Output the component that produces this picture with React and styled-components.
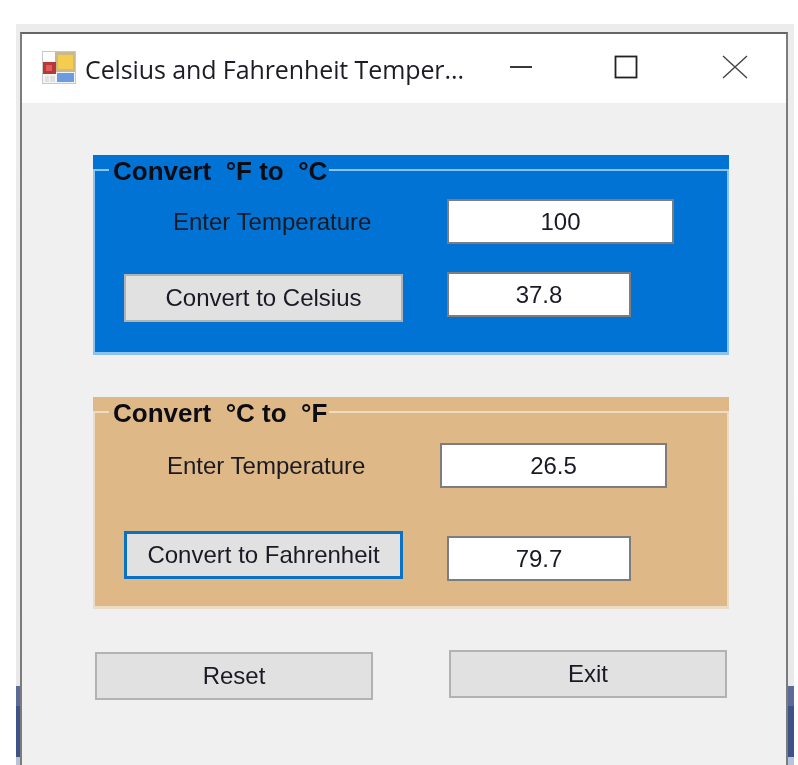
import styled, { createGlobalStyle } from 'styled-components';

const GlobalStyle = createGlobalStyle`
  html, body {
    margin: 0;
    padding: 0;
    background: #fff;
  }
`;

const Desktop = styled.div`
  box-sizing: border-box;
  width: 778px;
  height: 741px;
  margin: 24px 0 0 16px;
  padding: 8px 6px 0 4px;
  overflow: hidden;
  background: linear-gradient(
    to bottom,
    #ececec 0,
    #e9e9e9 662px,
    #5b6a96 662px,
    #5b6a96 682px,
    #3e5288 682px,
    #3e5288 733px,
    #b9c2d8 733px
  );
`;

const Window = styled.div`
  box-sizing: border-box;
  height: 733px;
  background: #f0f0f0;
  border: solid #7c7c7c;
  border-width: 2px 2px 0 2px;
  border-top-color: #666;
  font-family: 'Liberation Sans', Arial, sans-serif;
  color: #1a1a22;
  filter: blur(0.45px);
`;

const TitleBar = styled.div`
  display: flex;
  align-items: center;
  height: 69px;
  padding-left: 20px;
  background: #fff;
`;

const AppLogo = styled.svg`
  margin-bottom: 3px;
`;

const AppTitle = styled.span`
  margin-left: 9px;
  width: 396px;
  font-family: 'Open Sans', 'Noto Sans', sans-serif;
  font-size: 25px;
  letter-spacing: -0.1px;
  white-space: nowrap;
  color: #1c1c24;
`;

const WindowControls = styled.div`
  display: flex;
  align-items: center;
  gap: 82px;
  margin: 0 0 4px 27px;
`;

const Content = styled.div`
  display: flex;
  flex-direction: column;
  padding: 52px 57px 0 71px;
`;

const Group = styled.div`
  background: ${props => props.$bg};
  height: ${props => props.$height}px;
  margin-bottom: ${props => props.$after}px;
`;

const Frame = styled.fieldset`
  box-sizing: border-box;
  height: 100%;
  min-width: 0;
  margin: 0;
  padding: 0;
  border: 2px solid ${props => props.$line};
  border-bottom-width: 3px;
`;

const Legend = styled.legend`
  margin-left: 14px;
  padding: 0 2px 0 4px;
  height: 30px;
  line-height: 32px;
  font-size: 26px;
  font-weight: 700;
  white-space: pre;
  color: #0c0c14;
`;

const Row = styled.div`
  display: flex;
  align-items: flex-start;
  margin-top: ${props => props.$top}px;
`;

const Caption = styled.label`
  width: ${props => props.$width}px;
  padding-left: ${props => props.$indent}px;
  box-sizing: border-box;
  font-size: 24px;
  line-height: 45px;
  white-space: nowrap;
`;

const ActionButton = styled.button`
  box-sizing: border-box;
  width: 278px;
  height: 48px;
  padding: 0;
  background: #e1e1e1;
  border: ${props => (props.$focused ? '3px solid #0a72c4' : '2px solid #b2b2b2')};
  font-family: inherit;
  font-size: 24px;
  color: #1a1a26;
`;

const ConvertButton = styled(ActionButton)`
  width: 279px;
  margin: ${props => props.$drop}px 44px 0 29px;
`;

const Field = styled.input`
  box-sizing: border-box;
  width: ${props => props.$width}px;
  height: 45px;
  margin-top: ${props => props.$drop || 0}px;
  padding: 0;
  background: #fff;
  border: 2px solid #7d7d7d;
  border-radius: 0;
  outline: none;
  text-align: center;
  font-family: inherit;
  font-size: 24px;
  color: #1a1a26;
`;

const Footer = styled.div`
  display: flex;
  align-items: flex-start;
  gap: 76px;
  padding-left: 2px;
`;

const FooterButton = styled(ActionButton)`
  margin-top: ${props => props.$top}px;
`;

function AppIcon() {
  return (
    <AppLogo width="34" height="33" viewBox="0 0 34 33">
      <rect x="0.5" y="0.5" width="33" height="32" fill="#f4f4f4" stroke="#c8c8c8" />
      <rect x="1" y="1" width="12" height="9" fill="#fff" />
      <rect x="13" y="1" width="20" height="20" fill="#c9b98c" />
      <rect x="16" y="4" width="15" height="14" fill="#f4cd4f" />
      <rect x="1" y="11" width="13" height="12" fill="#b43a3a" />
      <rect x="4" y="14" width="6" height="6" fill="#e25a5a" />
      <rect x="15" y="22" width="17" height="9" fill="#6c9be0" />
      <rect x="3" y="25" width="4" height="6" fill="#e0e0e0" />
      <rect x="8" y="25" width="5" height="6" fill="#e0e0e0" />
    </AppLogo>
  );
}

function MinimizeIcon() {
  return (
    <svg width="24" height="24" viewBox="0 0 24 24">
      <line x1="2" y1="12" x2="24" y2="12" stroke="#222" strokeWidth="1.8" />
    </svg>
  );
}

function MaximizeIcon() {
  return (
    <svg width="24" height="24" viewBox="0 0 24 24">
      <rect x="1.5" y="1.5" width="21" height="21" fill="none" stroke="#222" strokeWidth="1.8" />
    </svg>
  );
}

function CloseIcon() {
  return (
    <svg width="28" height="26" viewBox="0 0 28 26">
      <path d="M3 2 L27 24 M27 2 L3 24" fill="none" stroke="#444" strokeWidth="1.4" />
    </svg>
  );
}

function App() {
  return (
    <>
      <GlobalStyle />
      <Desktop>
        <Window>
          <TitleBar>
            <AppIcon />
            <AppTitle>Celsius and Fahrenheit Temper...</AppTitle>
            <WindowControls>
              <MinimizeIcon />
              <MaximizeIcon />
              <CloseIcon />
            </WindowControls>
          </TitleBar>
          <Content>
            <Group $bg="#0073d4" $height={200} $after={42}>
              <Frame $line="#8cc2ee">
                <Legend>{'Convert  °F to  °C'}</Legend>
                <Row $top={14}>
                  <Caption $width={352} $indent={78}>Enter Temperature</Caption>
                  <Field $width={227} readOnly value="100" />
                </Row>
                <Row $top={28}>
                  <ConvertButton $drop={2}>Convert to Celsius</ConvertButton>
                  <Field $width={184} readOnly value="37.8" />
                </Row>
              </Frame>
            </Group>
            <Group $bg="#deb887" $height={212} $after={41}>
              <Frame $line="#ecdcc6">
                <Legend>{'Convert  °C to  °F'}</Legend>
                <Row $top={16}>
                  <Caption $width={345} $indent={72}>Enter Temperature</Caption>
                  <Field $width={227} readOnly value="26.5" />
                </Row>
                <Row $top={43}>
                  <ConvertButton $drop={0} $focused>Convert to Fahrenheit</ConvertButton>
                  <Field $width={184} $drop={5} readOnly value="79.7" />
                </Row>
              </Frame>
            </Group>
            <Footer>
              <FooterButton $top={2}>Reset</FooterButton>
              <FooterButton $top={0}>Exit</FooterButton>
            </Footer>
          </Content>
        </Window>
      </Desktop>
    </>
  );
}

export default App;
